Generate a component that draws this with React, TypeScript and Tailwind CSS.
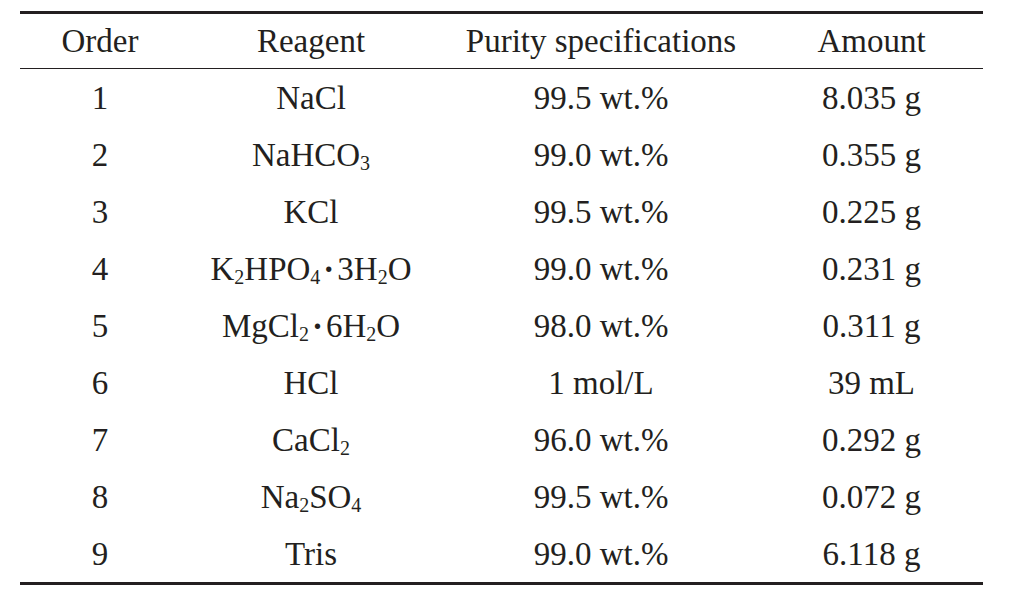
const rows: { order: string; reagent: React.ReactNode; purity: string; amount: string }[] = [
  { order: '1', reagent: 'NaCl', purity: '99.5 wt.%', amount: '8.035 g' },
  { order: '2', reagent: <>NaHCO<Sub>3</Sub></>, purity: '99.0 wt.%', amount: '0.355 g' },
  { order: '3', reagent: 'KCl', purity: '99.5 wt.%', amount: '0.225 g' },
  {
    order: '4',
    reagent: <>K<Sub>2</Sub>HPO<Sub>4</Sub><Dot />3H<Sub>2</Sub>O</>,
    purity: '99.0 wt.%',
    amount: '0.231 g',
  },
  {
    order: '5',
    reagent: <>MgCl<Sub>2</Sub><Dot />6H<Sub>2</Sub>O</>,
    purity: '98.0 wt.%',
    amount: '0.311 g',
  },
  { order: '6', reagent: 'HCl', purity: '1 mol/L', amount: '39 mL' },
  { order: '7', reagent: <>CaCl<Sub>2</Sub></>, purity: '96.0 wt.%', amount: '0.292 g' },
  { order: '8', reagent: <>Na<Sub>2</Sub>SO<Sub>4</Sub></>, purity: '99.5 wt.%', amount: '0.072 g' },
  { order: '9', reagent: 'Tris', purity: '99.0 wt.%', amount: '6.118 g' },
];

function Sub({ children }: { children: React.ReactNode }) {
  return <span className="text-[20px] leading-none align-[-4px]">{children}</span>;
}

function Dot() {
  return <span className="mx-[3px] font-bold">·</span>;
}

const cols = 'grid grid-cols-[160px_262px_318px_223px]';

export default function App() {
  return (
    <div
      className="w-[1010px] h-[604px] bg-white text-[#231f20] pt-[11px] pl-[20px]"
      style={{ fontFamily: '"Liberation Serif", "Times New Roman", serif' }}
    >
      <div className="w-[963px] text-[33px]">
        <div className="h-[2.5px] bg-[#231f20]" />
        <div className={`${cols} h-[54px] pt-[3px] items-center text-center`}>
          <div>Order</div>
          <div>Reagent</div>
          <div>Purity specifications</div>
          <div>Amount</div>
        </div>
        <div className="h-[1.5px] bg-[#231f20]" />
        {rows.map(r => (
          <div key={r.order} className={`${cols} h-[57px] pt-[2px] items-center text-center`}>
            <div>{r.order}</div>
            <div>{r.reagent}</div>
            <div>{r.purity}</div>
            <div>{r.amount}</div>
          </div>
        ))}
        <div className="h-[3px] bg-[#231f20]" />
      </div>
    </div>
  );
}
